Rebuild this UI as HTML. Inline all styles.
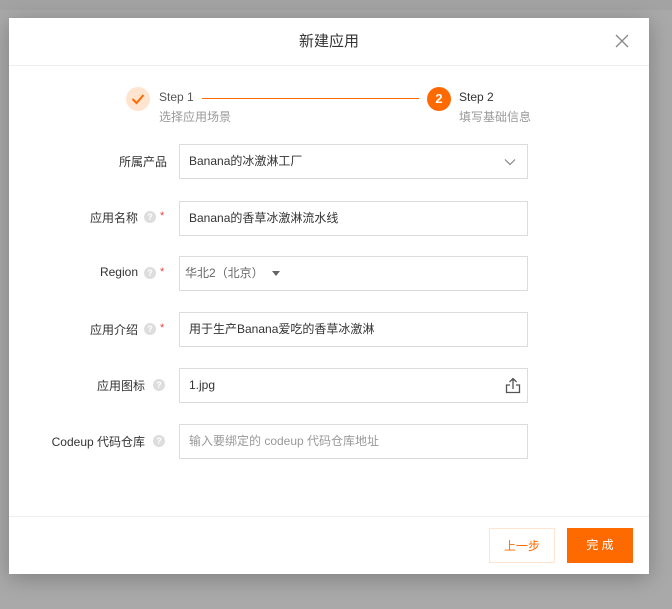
<!DOCTYPE html>
<html><head><meta charset="utf-8"><style>
*{box-sizing:border-box;margin:0;padding:0}
body{width:672px;height:609px;background:#a9a9a9;font-family:"Liberation Sans","Noto Sans CJK SC",sans-serif;position:relative;overflow:hidden;font-size:12px;color:#333}
.topband{position:absolute;left:0;top:0;width:672px;height:10px;background:#a3a3a3}
.modal{position:absolute;left:9px;top:18px;width:640px;height:556px;background:#fff;box-shadow:0 4px 20px rgba(0,0,0,.25)}
.hd{height:48px;border-bottom:1px solid #eee;text-align:center;line-height:48px;font-size:15px;color:#333}
.close{position:absolute;right:20px;top:16px}
.circle{position:absolute;width:24px;height:24px;border-radius:50%;text-align:center;line-height:24px;color:#fff;font-weight:bold;font-size:13px}
.st{position:absolute;font-size:12px;color:#555}
.sub{position:absolute;font-size:12px;color:#999}
.line{position:absolute;left:193px;top:80px;width:217px;height:1px;background:#ff6a00}
.lbl{position:absolute;font-size:12px;color:#333;text-align:right;white-space:nowrap}
.q{position:absolute;width:12px;height:12px;border-radius:50%;background:#ddd;color:#fff;font-size:9px;text-align:center;line-height:12px;font-weight:bold}
.star{position:absolute;color:#f04134;font-size:11px}
.inp{position:absolute;left:170px;width:349px;height:35px;border:1px solid #dcdcdc;padding-left:9px;line-height:33px;font-size:12px;color:#333}
.ft{position:absolute;left:0;top:498px;width:640px;border-top:1px solid #eee}
.btn{position:absolute;top:510px;width:66px;height:35px;text-align:center;line-height:35px;font-size:12px}
</style></head><body>
<div class="topband"></div>
<div class="modal">
<div class="hd">新建应用</div>
<svg class="close" width="14" height="14" viewBox="0 0 14 14"><path d="M1 1L13 13M13 1L1 13" stroke="#888" stroke-width="1.3"/></svg>
<div class="circle" style="left:117px;top:69px;background:#ffe4cf"><svg width="14" height="12" viewBox="0 0 14 12" style="margin-top:6px"><path d="M1.5 6L5.5 10L12.5 2" stroke="#ff6a00" stroke-width="2" fill="none"/></svg></div>
<div class="st" style="left:150px;top:72px">Step 1</div>
<div class="sub" style="left:150px;top:90px">选择应用场景</div>
<div class="line"></div>
<div class="circle" style="left:418px;top:69px;background:#ff6a00">2</div>
<div class="st" style="left:450px;top:72px;color:#333">Step 2</div>
<div class="sub" style="left:450px;top:90px">填写基础信息</div>

<div class="lbl" style="top:135px;right:482px">所属产品</div>
<div class="inp" style="top:126px">Banana的冰激淋工厂<svg style="position:absolute;right:11px;top:13px" width="12" height="8" viewBox="0 0 12 8"><path d="M1 1.5L6 6.5L11 1.5" stroke="#888" stroke-width="1.2" fill="none"/></svg></div>

<div class="lbl" style="top:191px;right:511px">应用名称</div><div class="q" style="left:135px;top:193px">?</div><div class="star" style="left:151px;top:192px">*</div>
<div class="inp" style="top:183px">Banana的香草冰激淋流水线</div>

<div class="lbl" style="top:247px;right:511px">Region</div><div class="q" style="left:135px;top:249px">?</div><div class="star" style="left:151px;top:248px">*</div>
<div class="inp" style="top:238px;padding-left:5px;color:#666">华北2（北京）<span style="display:inline-block;margin-left:8px;width:0;height:0;border-left:4px solid transparent;border-right:4px solid transparent;border-top:5px solid #666;vertical-align:middle"></span></div>

<div class="lbl" style="top:303px;right:511px">应用介绍</div><div class="q" style="left:135px;top:305px">?</div><div class="star" style="left:151px;top:304px">*</div>
<div class="inp" style="top:294px">用于生产Banana爱吃的香草冰激淋</div>

<div class="lbl" style="top:359px;right:504px">应用图标</div><div class="q" style="left:144px;top:361px">?</div>
<div class="inp" style="top:350px">1.jpg<svg style="position:absolute;right:6px;top:8px" width="16" height="17" viewBox="0 0 16 17"><path d="M8 12V2M4.5 5L8 1.5L11.5 5M5 8H1.5V15.5H14.5V8H11" stroke="#555" stroke-width="1.3" fill="none"/></svg></div>

<div class="lbl" style="top:415px;right:504px">Codeup 代码仓库</div><div class="q" style="left:144px;top:417px">?</div>
<div class="inp" style="top:406px;color:#999">输入要绑定的 codeup 代码仓库地址</div>

<div class="ft"></div>
<div class="btn" style="left:480px;border:1px solid #ffe4cf;color:#ff6a00">上一步</div>
<div class="btn" style="left:558px;background:#ff6a00;color:#fff">完 成</div>
</div>
</body></html>
